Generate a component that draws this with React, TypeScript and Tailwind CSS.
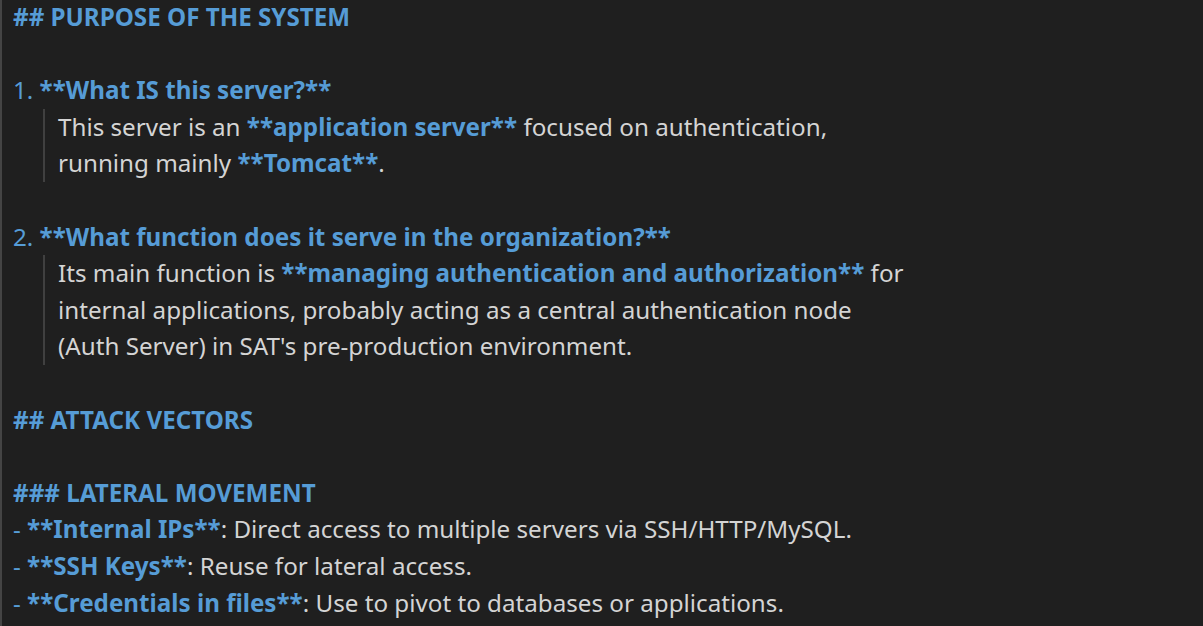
const B = "text-[#569cd6] font-bold";
const N = "text-[#569cd6]";

type Seg = [string, string?];
type Line = { segs: Seg[]; guide?: boolean };

const lines: Line[] = [
  { segs: [["## PURPOSE OF THE SYSTEM", B]] },
  { segs: [] },
  { segs: [["1. ", N], ["**What IS this server?**", B]] },
  { guide: true, segs: [["This server is an "], ["**application server**", B], [" focused on authentication,"]] },
  { guide: true, segs: [["running mainly "], ["**Tomcat**", B], ["."]] },
  { segs: [] },
  { segs: [["2. ", N], ["**What function does it serve in the organization?**", B]] },
  { guide: true, segs: [["Its main function is "], ["**managing authentication and authorization**", B], [" for"]] },
  { guide: true, segs: [["internal applications, probably acting as a central authentication node"]] },
  { guide: true, segs: [["(Auth Server) in SAT's pre-production environment."]] },
  { segs: [] },
  { segs: [["## ATTACK VECTORS", B]] },
  { segs: [] },
  { segs: [["### LATERAL MOVEMENT", B]] },
  { segs: [["- ", N], ["**Internal IPs**", B], [": Direct access to multiple servers via SSH/HTTP/MySQL."]] },
  { segs: [["- ", N], ["**SSH Keys**", B], [": Reuse for lateral access."]] },
  { segs: [["- ", N], ["**Credentials in files**", B], [": Use to pivot to databases or applications."]] },
];

export default function App() {
  return (
    <div className="w-[1203px] h-[626px] overflow-hidden bg-[#1f1f1f] border-l-2 border-[#444] pl-[11px]">
      <div className="-mt-[1px] font-['Liberation_Mono'] text-[24.2px] leading-[36.6px] text-[#d4d4d4] whitespace-pre">
        {lines.map((l, i) => (
          <div key={i} className="h-[36.6px] flex">
            {l.guide && (
              <span className="w-[45px] flex">
                <span className="w-[30px]" />
                <span className="w-[2px] bg-[#404040]" />
              </span>
            )}
            <span>
              {l.segs.map((s, j) => (
                <span key={j} className={s[1] ?? ""}>{s[0]}</span>
              ))}
            </span>
          </div>
        ))}
      </div>
    </div>
  );
}
